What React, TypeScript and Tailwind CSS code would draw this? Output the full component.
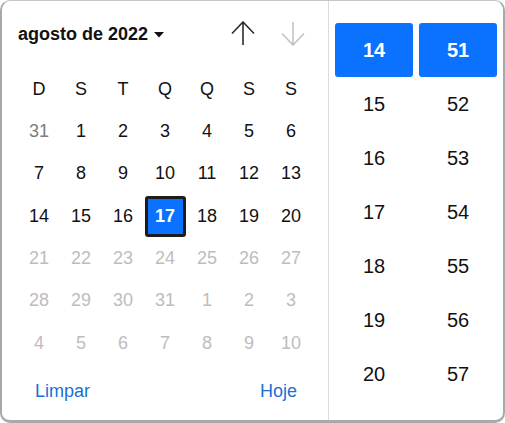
import React from "react";

const days = ["D", "S", "T", "Q", "Q", "S", "S"];

type Cell = { n: number; kind: "prev" | "cur" | "dis" | "sel" };

const cells: Cell[] = [];
cells.push({ n: 31, kind: "prev" });
for (let i = 1; i <= 20; i++) cells.push({ n: i, kind: i === 17 ? "sel" : "cur" });
for (let i = 21; i <= 31; i++) cells.push({ n: i, kind: "dis" });
for (let i = 1; i <= 10; i++) cells.push({ n: i, kind: "dis" });

const hours = [14, 15, 16, 17, 18, 19, 20];
const mins = [51, 52, 53, 54, 55, 56, 57];

export default function App() {
  return (
    <div
      className="w-[505px] h-[423px] bg-white"
      style={{ fontFamily: '"Liberation Sans", Arial, sans-serif' }}
    >
      <div className="w-[505px] h-[423px] flex rounded-[10px] border-t border-x-2 border-b-[3px] border-[#a9a9a9] border-t-[#c6c6c6] overflow-hidden">
        {/* Calendar */}
        <div className="w-[327px] border-r border-[#dcdcdc] flex flex-col">
          <div className="h-[42px] mt-[12px] flex items-center pl-[16px]">
            <span className="text-[18px] font-bold text-[#111]">agosto de 2022</span>
            <svg width="10" height="6" viewBox="0 0 10 6" className="ml-[6px] mt-[1px]">
              <path d="M0 0 H10 L5 5.5 Z" fill="#111" />
            </svg>
            <div className="ml-auto flex items-center gap-[26px] pr-[23px]">
              <svg width="24" height="26" viewBox="0 0 24 26">
                <path d="M12 1 V24 M1 12.5 L12 1 L23 12.5" fill="none" stroke="#2b2b2b" strokeWidth="1.6" />
              </svg>
              <svg width="24" height="26" viewBox="0 0 24 26">
                <path d="M12 1 V24 M1 12.5 L12 24 L23 12.5" fill="none" stroke="#c4c4c4" strokeWidth="1.6" />
              </svg>
            </div>
          </div>
          <div className="mt-[13px] ml-[16px] grid grid-cols-[repeat(7,42px)] auto-rows-[42.33px]">
            {days.map((d, i) => (
              <div key={"h" + i} className="flex items-center justify-center text-[18px] text-[#111]">
                {d}
              </div>
            ))}
            {cells.map((c, i) => (
              <div key={i} className="flex items-center justify-center">
                {c.kind === "sel" ? (
                  <div className="w-[41px] h-[41px] flex items-center justify-center bg-[#0a72ff] border-[3px] border-[#1c1c1c] rounded-[3px] text-white font-bold text-[18px]">
                    {c.n}
                  </div>
                ) : (
                  <span
                    className={
                      "text-[18px] " +
                      (c.kind === "cur"
                        ? "text-[#111]"
                        : c.kind === "prev"
                        ? "text-[#7d7d7d]"
                        : "text-[#bdbdbd]")
                    }
                  >
                    {c.n}
                  </span>
                )}
              </div>
            ))}
          </div>
          <div className="mt-[7px] h-[40px] flex items-center justify-between pl-[33px] pr-[31px] text-[18px] text-[#1a70d6]">
            <span>Limpar</span>
            <span>Hoje</span>
          </div>
        </div>
        {/* Time */}
        <div className="flex-1 pt-[22px] px-[6px] flex gap-[6px]">
          {[hours, mins].map((col, ci) => (
            <div key={ci} className="w-[78px] flex flex-col">
              {col.map((v, i) => (
                <div
                  key={v}
                  className={
                    "h-[54px] flex items-center justify-center text-[20px] " +
                    (i === 0 ? "bg-[#0a72ff] text-white font-bold rounded-[3px]" : "text-[#111]")
                  }
                >
                  {v}
                </div>
              ))}
            </div>
          ))}
        </div>
      </div>
    </div>
  );
}
